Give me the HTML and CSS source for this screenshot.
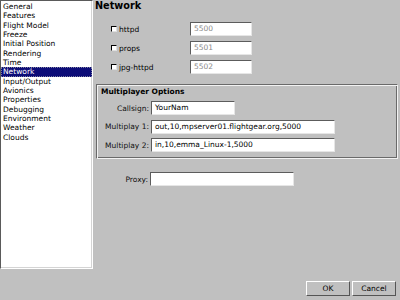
FILE: index.html
```html
<!DOCTYPE html>
<html>
<head>
<meta charset="utf-8">
<link rel="stylesheet" href="styles.css">
</head>
<body>
<div class="app">
  <ul class="list">
    <li>General</li>
    <li>Features</li>
    <li>Flight Model</li>
    <li>Freeze</li>
    <li>Initial Position</li>
    <li>Rendering</li>
    <li>Time</li>
    <li class="sel">Network</li>
    <li>Input/Output</li>
    <li>Avionics</li>
    <li>Properties</li>
    <li>Debugging</li>
    <li>Environment</li>
    <li>Weather</li>
    <li>Clouds</li>
  </ul>
  <main class="panel">
    <h1 class="title">Network</h1>
    <div class="servers">
      <div class="srv"><span class="check"><span class="cb"></span>httpd</span><span class="field dis w62">5500</span></div>
      <div class="srv"><span class="check"><span class="cb"></span>props</span><span class="field dis w62">5501</span></div>
      <div class="srv"><span class="check"><span class="cb"></span>jpg-httpd</span><span class="field dis w62">5502</span></div>
    </div>
    <section class="mp">
      <div class="mp-title">Multiplayer Options</div>
      <div class="form">
        <span class="lbl">Callsign:</span><span class="field w84">YourNam</span>
        <span class="lbl">Multiplay 1:</span><span class="field w184">out,10,mpserver01.flightgear.org,5000</span>
        <span class="lbl">Multiplay 2:</span><span class="field w184">in,10,emma_Linux-1,5000</span>
      </div>
    </section>
    <div class="form proxy">
      <span class="lbl">Proxy:</span><span class="field w144"></span>
    </div>
  </main>
  <footer class="buttons">
    <span class="btn">OK</span>
    <span class="btn">Cancel</span>
  </footer>
</div>
</body>
</html>
```
FILE: styles.css
```css
html, body {
  margin: 0;
  padding: 0;
  background: #c0c0c0;
}
.app {
  width: 400px;
  height: 300px;
  display: grid;
  grid-template-columns: 93px 1fr;
  grid-template-rows: 269px 1fr;
  font-family: "DejaVu Sans", sans-serif;
  font-size: 7.5px;
  color: #000;
  background: #c0c0c0;
}
.list {
  margin: 0;
  padding: 1px 0 0 0;
  list-style: none;
  background: #fff;
  border: 1px solid;
  border-color: #5a5a5a #fff #fff #5a5a5a;
  box-shadow: inset -1px -1px #d4d4d4;
}
.list li {
  height: 9.33px;
  line-height: 9.33px;
  padding-left: 2px;
  white-space: nowrap;
}
.list li.sel {
  background: #0c0c78;
  color: #fff;
  outline: 1px dotted #8080a0;
  outline-offset: -1px;
}
.panel {
  padding-left: 2px;
  display: flex;
  flex-direction: column;
}
.title {
  margin: 0;
  font-size: 9.7px;
  font-weight: bold;
  line-height: 12px;
  height: 12px;
}
.servers {
  margin: 10px 0 0 16px;
  display: flex;
  flex-direction: column;
  gap: 5px;
}
.srv {
  display: flex;
  align-items: center;
}
.check {
  width: 79px;
  display: flex;
  align-items: center;
}
.cb {
  display: inline-block;
  width: 4px;
  height: 4px;
  background: #fff;
  border: 1px solid;
  border-color: #000 #e0e0e0 #e0e0e0 #000;
  margin-right: 2px;
}
.field {
  display: block;
  box-sizing: border-box;
  height: 14px;
  line-height: 12px;
  padding-left: 3px;
  background: #fff;
  border: 1px solid;
  border-color: #5c5c5c #e6e6e6 #e6e6e6 #5c5c5c;
  white-space: nowrap;
  overflow: hidden;
}
.field.dis {
  color: #8a8a8a;
}
.w62 { width: 62px; }
.w84 { width: 84px; }
.w144 { width: 144px; }
.w184 { width: 184px; }
.mp {
  margin: 10px 2px 0 1px;
  height: 75px;
  box-sizing: border-box;
  border: 1px solid;
  border-color: #6a6a6a #f2f2f2 #f2f2f2 #6a6a6a;
  box-shadow: inset 1px 1px #f2f2f2, inset -1px -1px #6a6a6a;
  padding: 2px 2px 0 2px;
}
.mp-title {
  font-weight: bold;
  line-height: 10px;
  height: 10px;
  padding-left: 2px;
}
.form {
  margin-top: 4px;
  display: grid;
  grid-template-columns: 50px auto;
  column-gap: 2px;
  row-gap: 4.5px;
  align-items: center;
}
.lbl {
  text-align: right;
  white-space: nowrap;
  color: #111;
}
.proxy {
  margin-top: 13px;
  padding-left: 3px;
}
.buttons {
  grid-column: 1 / 3;
  display: flex;
  justify-content: flex-end;
  align-items: flex-start;
  gap: 2px;
  padding: 12px 4px 0 0;
}
.btn {
  box-sizing: border-box;
  width: 44px;
  height: 15px;
  line-height: 13px;
  text-align: center;
  border: 1px solid;
  border-color: #fff #555 #555 #fff;
  background: #c0c0c0;
}
```
